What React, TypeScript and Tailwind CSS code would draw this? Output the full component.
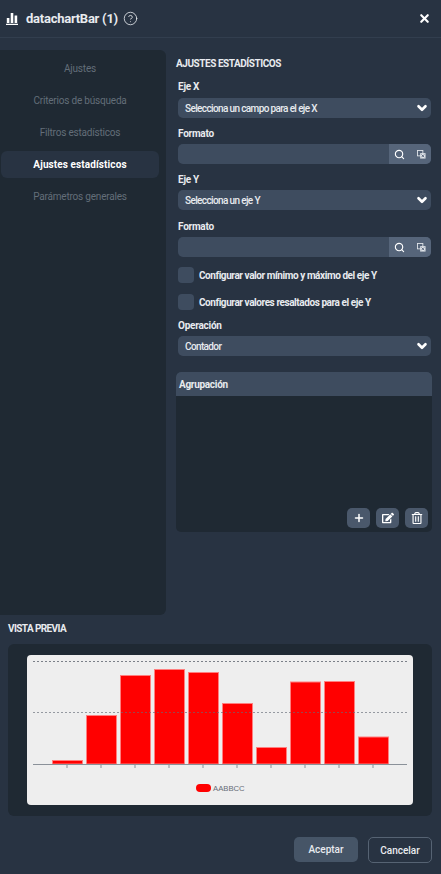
import { ChevronDown, CircleHelp, Search, X, Plus } from 'lucide-react';
import { FaEdit, FaRegTrashAlt } from 'react-icons/fa';

const bars = [
  { x: 52.5, top: 760.5 },
  { x: 86.5, top: 715.5 },
  { x: 120.5, top: 675.5 },
  { x: 154.5, top: 669.5 },
  { x: 188.5, top: 672.5 },
  { x: 222.5, top: 703.5 },
  { x: 256.5, top: 747.5 },
  { x: 290.5, top: 682 },
  { x: 324.5, top: 681.5 },
  { x: 358.5, top: 737 },
];

function Label({ children, className = '' }: { children: React.ReactNode; className?: string }) {
  return <div className={`text-[10px] leading-3 font-bold tracking-[-0.25px] text-[#e8ebef] ${className}`}>{children}</div>;
}

function SelectBox({ text }: { text: string }) {
  return (
    <div className="h-5 flex items-center justify-between rounded-[5px] bg-[#3e4c5f] pl-[7px] pr-[2px]">
      <span className="text-[10px] font-medium tracking-[-0.63px] text-[#e8ebef]">{text}</span>
      <ChevronDown className="w-[14px] h-[14px] text-white" strokeWidth={4.5} />
    </div>
  );
}

function FormatInput() {
  return (
    <div className="h-5 flex rounded-[5px] overflow-hidden bg-[#3e4c5f]">
      <div className="flex-1" />
      <div className="w-[42px] bg-[#56657a] flex items-center justify-between pl-[5px] pr-[5px]">
        <Search className="w-[11px] h-[11px] text-white" strokeWidth={2.5} />
        <svg viewBox="0 0 10 10" className="w-[9px] h-[9px]">
          <rect x="0.5" y="0.5" width="6" height="6" fill="none" stroke="#dfe3e8" strokeWidth="1" />
          <rect x="3.5" y="3.500" width="6" height="6" fill="#dfe3e8" />
          <path d="M5 5l3 3M8 5l-3 3" stroke="#56657a" strokeWidth="1" />
        </svg>
      </div>
    </div>
  );
}

function CheckRow({ text }: { text: string }) {
  return (
    <div className="flex items-center gap-[5px]">
      <div className="w-4 h-4 rounded-[4px] bg-[#3e4c5f]" />
      <span className="text-[10px] font-bold tracking-[-0.43px] text-[#e8ebef]">{text}</span>
    </div>
  );
}

function IconBtn({ children }: { children: React.ReactNode }) {
  return (
    <div className="w-[23px] h-5 rounded-[5px] bg-[#4a586b] flex items-center justify-center text-white">
      {children}
    </div>
  );
}

function NavItem({ text, active }: { text: string; active?: boolean }) {
  return (
    <div
      className={`h-[27px] mb-[5px] mr-[7px] ml-px flex items-center justify-center rounded-[6px] text-[10px] ${
        active ? 'bg-[#283342] text-white font-bold tracking-[0.1px]' : 'text-[#636e79] tracking-[-0.2px]'
      }`}
    >
      {text}
    </div>
  );
}

export default function App() {
  return (
    <div className="w-[441px] h-[874px] bg-[#283342] font-['Roboto',sans-serif] overflow-hidden flex flex-col">
      {/* HEADER */}
      <div className="h-[38px] shrink-0 border-b border-[#323e4e] flex items-center pl-[6px] pr-[10px]">
        <svg viewBox="0 0 12 12" className="w-3 h-3 mr-[8px]">
          <path d="M0 10.800h12V12H0zM.8 5h2.600v5H.8zM4.700 0h2.600v10H4.700zM8.600 2.500h2.600V10H8.600z" fill="#fff" />
        </svg>
        <span className="text-[13px] font-bold tracking-[-0.25px] text-[#e8ebef] mr-[5px]">datachartBar (1)</span>
        <CircleHelp className="w-[15px] h-[15px] text-[#e8ebef]" strokeWidth={1.3} />
        <X className="w-[13px] h-[13px] text-white ml-auto" strokeWidth={4} />
      </div>

      {/* BODY */}
      <div className="flex mt-3 h-[565px] shrink-0">
        <div className="w-[166px] shrink-0 bg-[#1f2933] rounded-r-[6px] pt-[5px]">
          <NavItem text="Ajustes" />
          <NavItem text="Criterios de búsqueda" />
          <NavItem text="Filtros estadísticos" />
          <NavItem text="Ajustes estadísticos" active />
          <NavItem text="Parámetros generales" />
        </div>

        <div className="w-[256px] ml-[10px]">
          <div className="text-[10px] leading-3 font-bold tracking-[-0.45px] text-[#e8ebef] mt-[8px] mb-[11px]">AJUSTES ESTADÍSTICOS</div>
          <div className="pl-[2px] pr-[1px]">
            <Label className="mb-[5px]">Eje X</Label>
            <SelectBox text="Selecciona un campo para el eje X" />
            <Label className="mt-[10px] mb-[4px]">Formato</Label>
            <FormatInput />
            <Label className="mt-[10px] mb-[4px]">Eje Y</Label>
            <SelectBox text="Selecciona un eje Y" />
            <Label className="mt-[11px] mb-[4px]">Formato</Label>
            <FormatInput />
            <div className="mt-[10px] flex flex-col gap-[11px]">
              <CheckRow text="Configurar valor mínimo y máximo del eje Y" />
              <CheckRow text="Configurar valores resaltados para el eje Y" />
            </div>
            <Label className="mt-[10px] mb-[4px]">Operación</Label>
            <SelectBox text="Contador" />
          </div>

          {/* AGRUPACION */}
          <div className="mt-[16px] h-[160px] rounded-[5px] bg-[#1f2933] overflow-hidden flex flex-col">
            <div className="h-6 shrink-0 bg-[#3e4c5f] flex items-center pl-[3px] text-[10px] font-bold tracking-[-0.3px] text-[#e8ebef]">
              Agrupación
            </div>
            <div className="flex-1 flex items-end justify-end gap-[6px] pr-[4px] pb-[4px]">
              <IconBtn>
                <Plus className="w-3 h-3" strokeWidth={3} />
              </IconBtn>
              <IconBtn>
                <FaEdit className="w-3 h-3" />
              </IconBtn>
              <IconBtn>
                <FaRegTrashAlt className="w-3 h-3" />
              </IconBtn>
            </div>
          </div>
        </div>
      </div>

      {/* VISTA PREVIA */}
      <div className="mt-[8px] pl-[8px] text-[10px] leading-3 font-bold tracking-[-0.6px] text-[#e8ebef]">VISTA PREVIA</div>
      <div className="mt-[9px] ml-[8px] w-[424px] h-[172px] rounded-[6px] bg-[#1f2933] pt-[11px] pl-[19px]">
        <div className="w-[386px] h-[150px] rounded-[4px] bg-[#eeeeee] overflow-hidden">
          <svg viewBox="27 655 386 150" className="w-[386px] h-[150px] block">
            {bars.map(b => (
              <rect
                key={b.x}
                x={b.x}
                y={b.top}
                width={30}
                height={764 - b.top}
                fill="#ff0000"
                stroke="#ff7f7f"
                strokeWidth={1}
              />
            ))}
            <line x1="33" x2="407" y1="661.5" y2="661.5" stroke="#666c76" strokeOpacity="0.85" strokeDasharray="2 2" />
            <line x1="33" x2="407" y1="712.5" y2="712.5" stroke="#666c76" strokeOpacity="0.65" strokeDasharray="2 2" />
            <line x1="33" x2="407" y1="764.500" y2="764.500" stroke="#8a9199" />
            {bars.map(b => (
              <line key={b.x} x1={b.x + 14.5} x2={b.x + 14.5} y1="765" y2="768" stroke="#8a9199" />
            ))}
            <rect x="196" y="784" width="15" height="8" rx="4" fill="#ff0000" />
            <text x="213" y="790.500" fontSize="7.700" fill="#666c76" fontFamily="Liberation Sans">AABBCC</text>
          </svg>
        </div>
      </div>

      {/* FOOTER */}
      <div className="mt-[21px] flex justify-end gap-[10px] pr-[9px]">
        <div className="w-[64px] h-[25px] rounded-[5px] bg-[#465567] flex items-center justify-center text-[10px] font-medium text-[#e8ebef]">
          Aceptar
        </div>
        <div className="w-[64px] h-[26px] rounded-[5px] border border-[#566373] flex items-center justify-center text-[10px] font-medium text-[#e8ebef]">
          Cancelar
        </div>
      </div>
    </div>
  );
}
